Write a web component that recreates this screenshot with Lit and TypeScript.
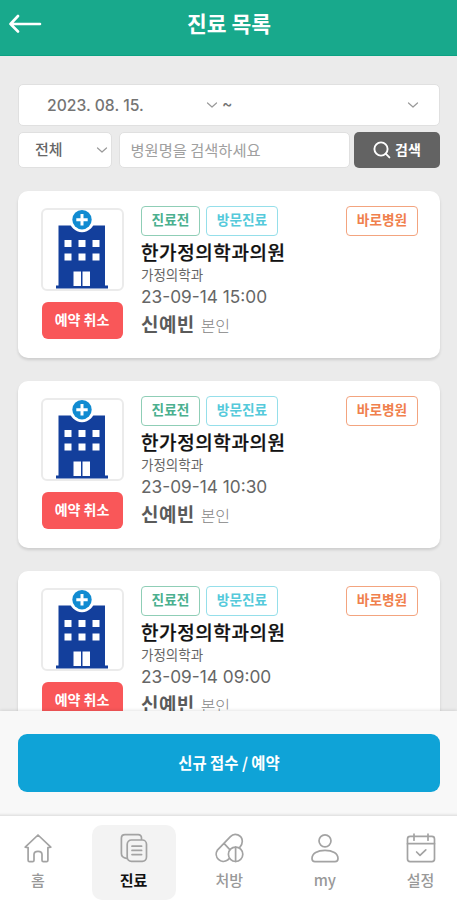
import { LitElement, html, css, svg } from "lit";
import { customElement, property } from "lit/decorators.js";

const chevron = html`<svg class="chev" width="12" height="8" viewBox="0 0 12 8" fill="none" stroke="#999" stroke-width="1.2" stroke-linecap="round" stroke-linejoin="round"><path d="M1.5 2 L6 6 L10.5 2"/></svg>`;

const icons: Record<string, unknown> = {
  home: svg`<path d="M2.2 14.2 L15 2 L27.8 14.2 L24.9 14.6 V27.2 Q24.9 28.6 23.5 28.6 H20.4 Q19 28.6 19 27.2 V21.6 Q19 18.3 15 18.3 Q11 18.3 11 21.6 V27.2 Q11 28.6 9.6 28.6 H6.5 Q5.1 28.6 5.1 27.2 V14.6 Z"/>`,
  docs: svg`<path d="M22.5 6.2 V5 Q22.5 1.7 19.2 1.7 H6 Q2.4 1.7 2.4 5.3 V20.5 Q2.4 24.6 7.6 25.3"/><rect x="8.2" y="7" width="19.3" height="21.3" rx="4.2"/><path d="M13 13.2 H22.6 M13 17.4 H22.6 M13 21.6 H22.6"/>`,
  pills: svg`<path d="M3.4 17.2 L16.4 3.6 A6.9 6.9 0 0 1 28.3 8.2 Q28.3 11.8 25.6 14.6 M15.4 25.4 L13.6 27 A7.2 7.2 0 0 1 3.4 17.2 M10 10.4 L15.8 16.6"/><circle cx="21.6" cy="21.3" r="7.2"/><path d="M21.6 14.1 V28.5"/>`,
  user: svg`<circle cx="15" cy="7.8" r="6"/><path d="M2 25.5 C2 20.4 7.4 17.3 15 17.3 S28 20.4 28 25.5 Q28 28.6 25 28.6 H5 Q2 28.6 2 25.5 Z"/>`,
  calendar: svg`<rect x="1.5" y="3.4" width="27" height="25.2" rx="2.6"/><path d="M1.5 10.7 H28.5 M8 1.2 V7.2 M22 1.2 V7.2 M10.6 19 L14 22.3 L19.8 16.8"/>`,
};

@customElement("clinic-card")
class ClinicCard extends LitElement {
  @property() time = "";

  static styles = css`
    :host { display: block; height: 167px; box-sizing: border-box; background: #fff; border-radius: 10px; padding: 17px 22px 0 22.5px; box-shadow: 0 2px 3px rgba(0, 0, 0, 0.13); }
    .body { display: flex; }
    .left { width: 83px; flex: none; }
    .photo { box-sizing: border-box; width: 83px; height: 83px; border: 2px solid #ebebeb; border-radius: 6px; display: block; }
    .photo svg { display: block; }
    .cancel { width: 81px; height: 37px; margin: 11px 0 0 1px; border: 0; padding: 0 0 2px; border-radius: 6px; background: #f95759; color: #fff; font: 700 14px/33px "Noto Sans CJK KR", sans-serif; white-space: nowrap; }
    .info { flex: 1; margin-left: 17.5px; display: flex; flex-direction: column; margin-top: -2px; }
    .tags { display: flex; gap: 6px; height: 30px; }
    .tag { box-sizing: border-box; height: 30px; border: 1.5px solid; border-radius: 4px; font-size: 13.7px; font-weight: 700; line-height: 25px; text-align: center; white-space: nowrap; }
    .state { width: 59px; color: #4bb08f; border-color: #8fceb6; }
    .visit { width: 72px; color: #55cadb; border-color: #95dfea; }
    .direct { width: 72px; margin-left: auto; color: #f0804d; border-color: #f3a47f; }
    .name { font-size: 19px; font-weight: 500; line-height: 28px; height: 28px; margin-top: 2px; letter-spacing: 0.6px; color: #111; -webkit-text-stroke: 0.25px #111; white-space: nowrap; }
    .dept { font-size: 13.5px; line-height: 17px; color: #666; }
    .time { font: 400 17.3px/27px Inter, sans-serif; color: #666; }
    .who { display: flex; align-items: baseline; gap: 6px; height: 28px; line-height: 28px; }
    .patient { font-size: 19px; font-weight: 700; color: #5a5a5a; letter-spacing: 0.4px; }
    .rel { font-size: 16px; color: #858585; font-weight: 300; }
  `;

  render() {
    return html`<div class="body">
      <div class="left">
        <div class="photo">
          <svg width="79" height="79" viewBox="0 0 79 79">
            <rect x="15.5" y="15.5" width="46.5" height="61" fill="#133f9c"/>
            <rect x="13" y="75.5" width="52" height="3" fill="#133f9c"/>
            ${[21.5, 35.5, 49.5].map((x) => svg`<rect x=${x} y="30" width="7" height="7" fill="#fff"/><rect x=${x} y="43.5" width="7" height="7" fill="#fff"/>`)}
            <rect x="30.5" y="61.5" width="7.5" height="14.5" fill="#fff"/>
            <rect x="39.5" y="61.5" width="7.5" height="14.5" fill="#fff"/>
            <circle cx="39" cy="9.7" r="12.5" fill="#fff"/>
            <circle cx="39" cy="9.7" r="9.7" fill="#118bd1"/>
            <path d="M39 4 V15.4 M33.3 9.7 H44.7" stroke="#fff" stroke-width="3" />
          </svg>
        </div>
        <button class="cancel">예약 취소</button>
      </div>
      <div class="info">
        <div class="tags">
          <span class="tag state">진료전</span>
          <span class="tag visit">방문진료</span>
          <span class="tag direct">바로병원</span>
        </div>
        <div class="name">한가정의학과의원</div>
        <div class="dept">가정의학과</div>
        <div class="time">${this.time}</div>
        <div class="who"><span class="patient">신예빈</span><span class="rel">본인</span></div>
      </div>
    </div>`;
  }
}

@customElement("app-root")
class AppRoot extends LitElement {
  static styles = css`
    :host { display: flex; flex-direction: column; height: 900px; width: 457px; overflow: hidden; background: #ebebeb; font-family: "Noto Sans CJK KR", sans-serif; }
    header { flex: none; height: 56px; box-sizing: border-box; background: #18a98c; display: grid; grid-template-columns: 52px 1fr 52px; color: #fff; border-bottom: 1px solid #0ba283; }
    .back { margin: 14px 0 0 9px; }
    h1 { margin: 0; font-size: 21.5px; font-weight: 700; line-height: 45px; text-align: center; padding-left: 1px; }
    main { flex: 1; min-height: 0; overflow: hidden; padding: 28px 17px 0 18px; }
    .field { box-sizing: border-box; background: #fff; border: 1px solid #e0e0e0; border-radius: 5px; display: flex; align-items: center; }
    .dates { height: 42px; padding: 0 20px 0 28px; font: 500 15.7px Inter, sans-serif; color: #747474; }
    .date { width: 159px; white-space: nowrap; }
    .tilde { margin: -4px 0 0 4px; }
    .dates .chev:last-child { margin-left: auto; }
    .filters { display: flex; height: 36px; margin-top: 6px; }
    .kind { width: 94px; padding: 0 3px 0 16px; justify-content: space-between; font-size: 15px; font-weight: 500; color: #666; }
    .query { width: 231px; margin-left: 6.5px; padding-left: 11px; font-size: 15.3px; color: #a0a0a0; }
    .kind span, .query span { margin-top: -3px; }
    .search { width: 86px; margin-left: 4.5px; border: 0; border-radius: 5px; background: #636363; color: #fff; display: flex; align-items: center; justify-content: center; gap: 4px; padding: 0; font: 700 14px "Noto Sans CJK KR", sans-serif; }
    .search span { margin-top: -3px; }
    .list { display: flex; flex-direction: column; gap: 23px; margin-top: 23px; }
    .action { flex: none; height: 105px; box-sizing: border-box; padding: 23px 17px 0 18px; background: #f8f8f8; box-shadow: 0 -1px 3px rgba(0, 0, 0, 0.1); position: relative; }
    .new { width: 100%; height: 58px; border: 0; border-radius: 9px; background: #0fa3d7; color: #fff; font: 700 15.4px "Noto Sans CJK KR", sans-serif; padding: 0 0 2px; }
    nav { flex: none; position: relative; height: 84px; box-sizing: border-box; background: #fff; box-shadow: 0 -1px 3px rgba(0, 0, 0, 0.13); display: flex; justify-content: space-between; padding-top: 9px; margin: 0 -5.5px 0 -4px; }
    .item { width: 84px; height: 75px; flex: none; border-radius: 10px; display: flex; flex-direction: column; align-items: center; color: #999; font-size: 15px; font-weight: 500; line-height: 22px; }
    .item svg { margin: 8px 0 6px; fill: none; stroke: #a3a3a3; stroke-width: 1.7; stroke-linecap: round; stroke-linejoin: round; }
    .active { background: #f3f3f3; color: #111; font-weight: 700; }
  `;

  render() {
    const tabs = [["home", "홈"], ["docs", "진료"], ["pills", "처방"], ["user", "my"], ["calendar", "설정"]];
    return html`
      <header>
        <svg class="back" width="34" height="20" viewBox="0 0 34 20" fill="none" stroke="#fff" stroke-width="2.6" stroke-linecap="round" stroke-linejoin="round"><path d="M31 10 H1.5 M9 2 L1.5 10 L9 17.5"/></svg>
        <h1>진료 목록</h1>
      </header>
      <main>
        <div class="field dates"><span class="date">2023. 08. 15.</span>${chevron}<span class="tilde">~</span>${chevron}</div>
        <div class="filters">
          <div class="field kind"><span>전체</span>${chevron}</div>
          <div class="field query"><span>병원명을 검색하세요</span></div>
          <button class="search"><svg width="18" height="18" viewBox="0 0 18 18" fill="none" stroke="#fff" stroke-width="1.9" stroke-linecap="round"><circle cx="8" cy="8" r="6.6"/><path d="M12.7 12.7 L16.4 16.4"/></svg><span>검색</span></button>
        </div>
        <div class="list">
          ${["23-09-14 15:00", "23-09-14 10:30", "23-09-14 09:00"].map((t) => html`<clinic-card .time=${t}></clinic-card>`)}
        </div>
      </main>
      <div class="action"><button class="new">신규 접수 / 예약</button></div>
      <nav>
        ${tabs.map(([id, label]) => html`<div class="item ${id === "docs" ? "active" : ""}"><svg width="30" height="30" viewBox="0 0 30 30">${icons[id]}</svg><span>${label}</span></div>`)}
      </nav>`;
  }
}
